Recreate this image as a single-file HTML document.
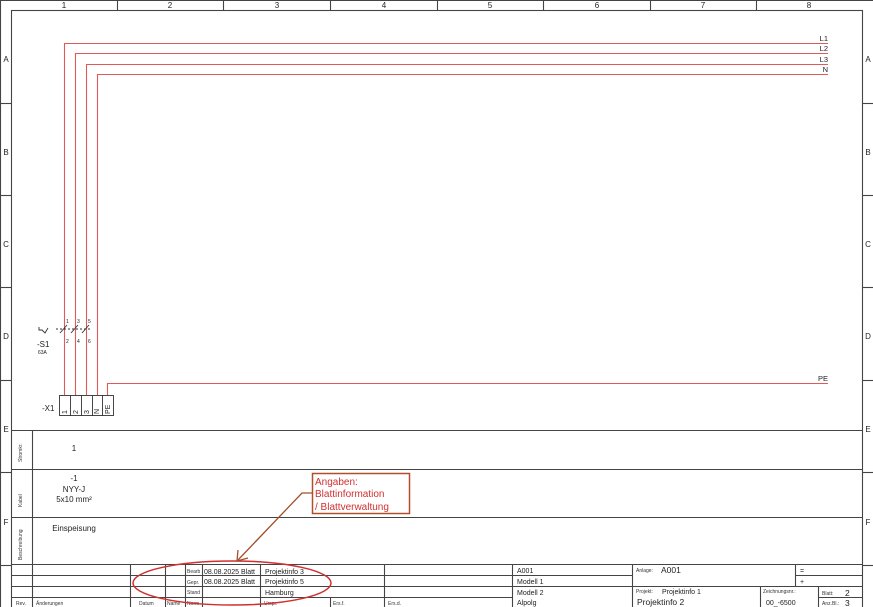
<!DOCTYPE html>
<html><head><meta charset="utf-8"><style>
html,body{margin:0;padding:0;background:#fff;}
svg{display:block;font-family:"Liberation Sans",Arial,sans-serif;}
</style></head><body>
<svg width="873" height="607" viewBox="0 0 873 607" xmlns="http://www.w3.org/2000/svg">
<rect width="873" height="607" fill="#fff"/>
<g stroke="#444" stroke-width="1.1" fill="none">
<line x1="0.5" y1="0.5" x2="873" y2="0.5"/>
<line x1="0.5" y1="0" x2="0.5" y2="607"/>
<rect x="11.5" y="10.5" width="851" height="600"/>
<line x1="117.5" y1="0" x2="117.5" y2="10"/><line x1="223.5" y1="0" x2="223.5" y2="10"/>
<line x1="330.5" y1="0" x2="330.5" y2="10"/><line x1="437.5" y1="0" x2="437.5" y2="10"/>
<line x1="543.5" y1="0" x2="543.5" y2="10"/><line x1="650.5" y1="0" x2="650.5" y2="10"/>
<line x1="756.5" y1="0" x2="756.5" y2="10"/>
<g>
<line x1="0" y1="103.5" x2="11" y2="103.5"/><line x1="0" y1="195.5" x2="11" y2="195.5"/>
<line x1="0" y1="287.5" x2="11" y2="287.5"/><line x1="0" y1="380.5" x2="11" y2="380.5"/>
<line x1="0" y1="472.5" x2="11" y2="472.5"/><line x1="0" y1="565.5" x2="11" y2="565.5"/>
<line x1="862" y1="103.5" x2="873" y2="103.5"/><line x1="862" y1="195.5" x2="873" y2="195.5"/>
<line x1="862" y1="287.5" x2="873" y2="287.5"/><line x1="862" y1="380.5" x2="873" y2="380.5"/>
<line x1="862" y1="472.5" x2="873" y2="472.5"/><line x1="862" y1="565.5" x2="873" y2="565.5"/>
</g>
<line x1="11" y1="430.5" x2="862" y2="430.5"/>
<line x1="11" y1="469.5" x2="862" y2="469.5"/>
<line x1="11" y1="517.5" x2="862" y2="517.5"/>
<line x1="11" y1="564.5" x2="862" y2="564.5"/>
<line x1="32.5" y1="430" x2="32.5" y2="607"/>
<line x1="11" y1="575.5" x2="632" y2="575.5"/>
<line x1="11" y1="586.5" x2="632" y2="586.5"/>
<line x1="11" y1="597.5" x2="512" y2="597.5"/>
<line x1="632" y1="586.5" x2="862" y2="586.5"/>
<line x1="795" y1="575.5" x2="862" y2="575.5"/>
<line x1="818" y1="597.5" x2="862" y2="597.5"/>
<line x1="130.5" y1="565" x2="130.5" y2="607"/>
<line x1="165.5" y1="565" x2="165.5" y2="607"/>
<line x1="185.5" y1="565" x2="185.5" y2="607"/>
<line x1="202.5" y1="565" x2="202.5" y2="607"/>
<line x1="260.5" y1="565" x2="260.5" y2="607"/>
<line x1="330.5" y1="597" x2="330.5" y2="607"/>
<line x1="384.5" y1="565" x2="384.5" y2="607"/>
<line x1="512.5" y1="565" x2="512.5" y2="607"/>
<line x1="632.5" y1="565" x2="632.5" y2="607"/>
<line x1="795.5" y1="565" x2="795.5" y2="586"/>
<line x1="760.5" y1="586" x2="760.5" y2="607"/>
<line x1="818.5" y1="586" x2="818.5" y2="607"/>
</g>
<g font-size="8" fill="#222" text-anchor="middle">
<text x="64" y="8">1</text><text x="170" y="8">2</text><text x="277" y="8">3</text><text x="384" y="8">4</text>
<text x="490" y="8">5</text><text x="597" y="8">6</text><text x="703" y="8">7</text><text x="809" y="8">8</text>
<text x="6" y="62">A</text><text x="6" y="155">B</text><text x="6" y="247">C</text><text x="6" y="339">D</text><text x="6" y="432">E</text><text x="6" y="525">F</text>
<text x="868" y="62">A</text><text x="868" y="155">B</text><text x="868" y="247">C</text><text x="868" y="339">D</text><text x="868" y="432">E</text><text x="868" y="525">F</text>
</g>
<g stroke="#e05a5a" stroke-width="1.1" fill="none">
<polyline points="828,43.5 64.5,43.5 64.5,395"/>
<polyline points="828,53.5 75.5,53.5 75.5,395"/>
<polyline points="828,64.5 86.5,64.5 86.5,395"/>
<polyline points="828,74.5 97.5,74.5 97.5,395"/>
<polyline points="828,383.5 107.5,383.5 107.5,395"/>
</g>
<g stroke="#333" stroke-width="0.9" fill="none">
<line x1="60" y1="333" x2="67" y2="325"/><line x1="71" y1="333" x2="78" y2="325"/><line x1="82" y1="333" x2="89" y2="325"/>
<line x1="56" y1="329" x2="90" y2="329" stroke-dasharray="2,2"/>
<path d="M39 327 L39 330 L42 330 L45 333 L48 328"/>
<rect x="59.5" y="395.5" width="54" height="20"/>
<line x1="70.5" y1="395" x2="70.5" y2="416"/><line x1="81.5" y1="395" x2="81.5" y2="416"/>
<line x1="92.5" y1="395" x2="92.5" y2="416"/><line x1="102.5" y1="395" x2="102.5" y2="416"/>
</g>
<g font-size="5" fill="#222">
<text x="66" y="323">1</text><text x="77" y="323">3</text><text x="88" y="323">5</text>
<text x="66" y="343">2</text><text x="77" y="343">4</text><text x="88" y="343">6</text>
<text x="38" y="354">63A</text>
</g>
<text x="37" y="347" font-size="8" fill="#222">-S1</text>
<text x="42" y="411" font-size="8" fill="#222">-X1</text>
<g font-size="7" fill="#222">
<text transform="translate(67,414) rotate(-90)">1</text>
<text transform="translate(78,414) rotate(-90)">2</text>
<text transform="translate(89,414) rotate(-90)">3</text>
<text transform="translate(99,414) rotate(-90)">N</text>
<text transform="translate(110,414) rotate(-90)">PE</text>
</g>
<g font-size="7.5" fill="#222" text-anchor="end">
<text x="828" y="41">L1</text><text x="828" y="51">L2</text><text x="828" y="62">L3</text><text x="828" y="72">N</text><text x="828" y="381">PE</text>
</g>
<g font-size="5" fill="#333">
<text transform="translate(22,462) rotate(-90)">Stromkr.</text>
<text transform="translate(22,507) rotate(-90)">Kabel</text>
<text transform="translate(22,560) rotate(-90)">Beschreibung</text>
</g>
<g font-size="8" fill="#222" text-anchor="middle">
<text x="74" y="451">1</text>
<text x="74" y="481">-1</text>
<text x="74" y="492">NYY-J</text>
<text x="74" y="502">5x10 mm²</text>
<text x="74" y="531">Einspeisung</text>
</g>
<g font-size="5" fill="#333">
<text x="187" y="573">Bearb</text><text x="187" y="584">Gepr.</text><text x="187" y="594">Stand</text><text x="187" y="605">Norm</text>
<text x="16" y="605">Rev.</text><text x="36" y="605">Änderungen</text><text x="139" y="605">Datum</text><text x="167" y="605">Name</text>
<text x="264" y="605">Urspr.</text><text x="333" y="605">Ers.f.</text><text x="388" y="605">Ers.d.</text>
<text x="636" y="572">Anlage:</text><text x="636" y="593">Projekt:</text><text x="763" y="593">Zeichnungsnr.:</text>
<text x="822" y="595">Blatt:</text><text x="822" y="605">Anz.Bl.:</text>
</g>
<g font-size="7" fill="#222">
<text x="204" y="574">08.08.2025 Blatt</text><text x="204" y="584">08.08.2025 Blatt</text>
<text x="265" y="574">Projektinfo 3</text><text x="265" y="584">Projektinfo 5</text><text x="265" y="595">Hamburg</text>
<text x="517" y="573">A001</text><text x="517" y="584">Modell 1</text><text x="517" y="595">Modell 2</text><text x="517" y="605">Alpolg</text>
<text x="662" y="594">Projektinfo 1</text>
<text x="766" y="605">00_-6500</text>
<text x="800" y="573">=</text><text x="800" y="584">+</text>
</g>
<text x="661" y="573" font-size="8.5" fill="#222">A001</text>
<text x="637" y="605" font-size="8.5" fill="#222">Projektinfo 2</text>
<text x="845" y="596" font-size="8.5" fill="#222">2</text>
<text x="845" y="606" font-size="8.5" fill="#222">3</text>
<ellipse cx="232" cy="583" rx="99" ry="22" fill="none" stroke="#d03030" stroke-width="1.5"/>
<rect x="312.5" y="473.5" width="97" height="40" fill="#fff" stroke="#b0502a" stroke-width="1.5"/>
<g font-size="10" fill="#d03030">
<text x="315" y="485">Angaben:</text><text x="315" y="497">Blattinformation</text><text x="315" y="510">/ Blattverwaltung</text>
</g>
<g stroke="#a0502a" stroke-width="1.3" fill="none">
<polyline points="312,493 302,493 238,560"/>
<polyline points="238,550 237,561 248,558"/>
</g>
</svg>
</body></html>
